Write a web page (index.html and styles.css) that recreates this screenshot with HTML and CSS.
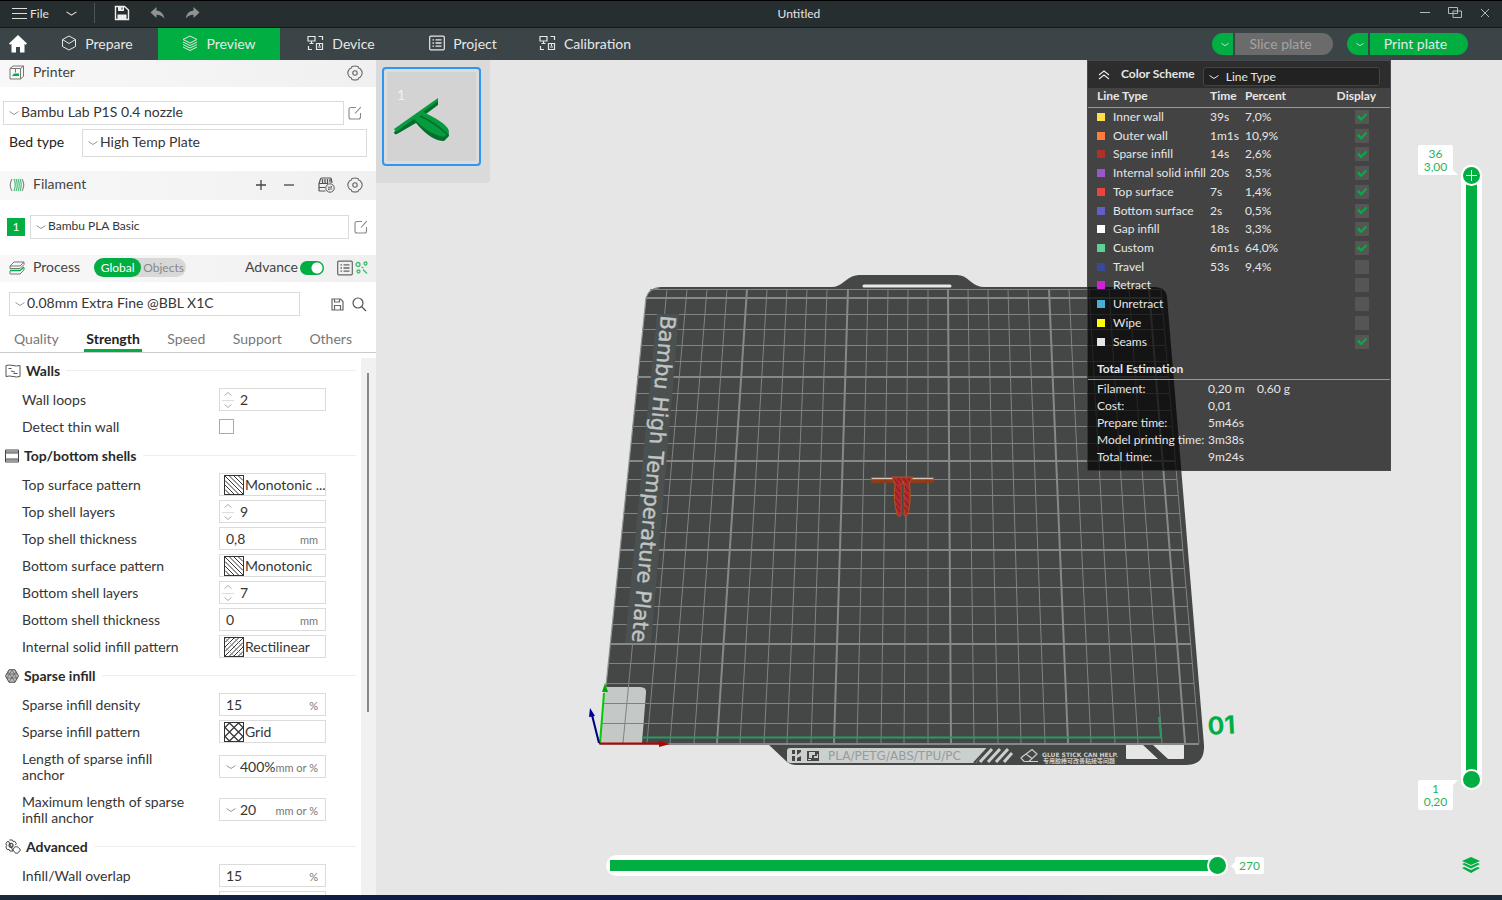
FILE: index.html
```html
<!DOCTYPE html>
<html lang="en">
<head>
    <meta charset="UTF-8">
    <meta name="viewport" content="width=device-width, initial-scale=1.0">
    <title>Untitled</title>
    <link rel="stylesheet" href="styles.css">
</head>
<body>
    <!-- Shared icons -->
    <svg class="sprite" aria-hidden="true">
        <symbol id="chevron" viewBox="0 0 10 6"><path d="M.5 1.500 5 4.500 9.500 1.500" fill="none" stroke="currentColor" stroke-linejoin="round"/></symbol>
        <symbol id="gear" viewBox="0 0 16 16">
            <path d="M5 1.500Q8 .5 11 1.500q.3 2 2.300 2.300Q15 5.500 15.200 8q-.2 2.500-1.900 4.200-2 .3-2.300 2.300-3 1-6 0-.3-2-2.300-2.300Q1 10.500.8 8 1 5.500 2.700 3.800 4.700 3.500 5 1.500z" fill="none" stroke="currentColor" stroke-width="1.100"/>
            <circle cx="8" cy="8" r="2.200" fill="none" stroke="currentColor" stroke-width="1.100"/>
        </symbol>
        <symbol id="edit" viewBox="0 0 14 14"><path d="M8 1.500H3Q1 1.500 1 3.500v7.500q0 2 2 2h7.500q2 0 2-2V7M7 7.500 12.800 1.200" fill="none" stroke="currentColor" stroke-width="1.100"/></symbol>
        <symbol id="device" viewBox="0 0 17 16">
            <path d="M1 1.500h7v4.500H1zM4.500 6v2.500M2.500 8.500h4M11.500 1.500H15.500V5M1.500 11v3.500H5M9.500 8.500h6v6h-6zM12.500 8.500v2.500M11 12h3" fill="none" stroke="currentColor" stroke-width="1.200"/>
        </symbol>
        <symbol id="list" viewBox="0 0 16 16">
            <rect x=".7" y="1.200" width="14.600" height="13.600" rx="1" fill="none" stroke="currentColor" stroke-width="1.200"/>
            <path d="M3.500 4.800h1.500M6.500 4.800h6M3.500 8h1.500M6.500 8h6M3.500 11.200h1.500M6.500 11.200h6" stroke="currentColor" stroke-width="1.300"/>
        </symbol>
        <symbol id="spin" viewBox="0 0 12 20"><path d="M2.500 5.500 6 2.500l3.500 3M2.500 14.500 6 17.500l3.500-3" fill="none" stroke="#b0b0b0"/><path d="M0 10.500h12" stroke="#ddd"/></symbol>
        <symbol id="monotonic" viewBox="0 0 20 20">
            <path d="M1 14.500 5.500 19M1 10l9 9M1 5.500 14.500 19M1 1l18 18M5.500 1 19 14.500M10 1l9 9M14.500 1 19 5.500" stroke="#333"/>
            <rect x=".5" y=".5" width="19" height="19" fill="none" stroke="#333"/>
        </symbol>
        <symbol id="rectilinear" viewBox="0 0 20 20">
            <path d="M1 5.500 5.500 1M1 10l9-9M1 14.500 14.500 1M1 19 19 1M5.500 19 19 5.500M10 19l9-9M14.500 19 19 14.500" stroke="#333"/>
            <path d="M1 10 10 19M1 1l18 18M10 1l9 9" stroke="#888" stroke-width=".6"/>
            <rect x=".5" y=".5" width="19" height="19" fill="none" stroke="#333"/>
        </symbol>
        <symbol id="grid" viewBox="0 0 20 20">
            <path d="M1 5.500 5.500 1M1 14.500 14.500 1M5.500 19 19 5.500M14.500 19 19 14.500M1 14.500 5.500 19M1 5.500 14.500 19M5.500 1 19 14.500M14.500 1 19 5.500" stroke="#333" stroke-width="1.200"/>
            <rect x=".5" y=".5" width="19" height="19" fill="none" stroke="#333"/>
        </symbol>
    </svg>

    <header class="titlebar">
        <button class="file-btn"><svg width="15" height="13" viewBox="0 0 15 13"><path d="M0 1.500h15M0 6.500h15M0 11.500h15" stroke="#ddd" stroke-width="1.200"/></svg>File</button>
        <button class="icon-btn" aria-label="File menu"><svg width="11" height="7"><use href="#chevron"/></svg></button>
        <span class="divider"></span>
        <button class="icon-btn" aria-label="Save"><svg width="16" height="16" viewBox="0 0 16 16"><path d="M1.500 1.500h9l4 3.500v9.500h-13z" fill="none" stroke="#eee" stroke-width="1.400"/><path d="M4 1.500h6V6H4zM3.500 9.500h9v5h-9z" fill="#eee"/><path d="M8 2.500v2" stroke="#262e30"/></svg></button>
        <button class="icon-btn" aria-label="Undo"><svg width="15" height="12" viewBox="0 0 15 12"><path d="M6.500 0v3.500Q13 4 14.500 11.500 11 7.500 6.500 7.700V11L.5 5.500z" fill="#8f9394"/></svg></button>
        <button class="icon-btn" aria-label="Redo"><svg width="15" height="12" viewBox="0 0 15 12"><path d="M8.500 0v3.500Q2 4 .5 11.500 4 7.500 8.500 7.700V11l6-5.500z" fill="#8f9394"/></svg></button>
        <span class="doc-title">Untitled</span>
        <div class="window-controls">
            <button aria-label="Minimize"><svg width="14" height="14" viewBox="0 0 14 14"><path d="M2 6.500h10" stroke="currentColor"/></svg></button>
            <button aria-label="Restore"><svg width="14" height="14" viewBox="0 0 14 14"><path d="M.5 1.500h9v6h-9zM5 5h8.500v6.500H5z" fill="none" stroke="currentColor"/></svg></button>
            <button aria-label="Close"><svg width="14" height="14" viewBox="0 0 14 14"><path d="M3 3l8 8M11 3l-8 8" stroke="currentColor"/></svg></button>
        </div>
    </header>

    <nav class="navbar">
        <button class="home" aria-label="Home"><svg width="18" height="18" viewBox="0 0 18 18"><path d="M9 0 0 8.500l1.200 1.200L2.500 9v8.500H7V12h4v5.500h4.500V9l1.300.7L18 8.500z" fill="#fff"/></svg></button>
        <button class="tab"><svg width="16" height="16" viewBox="0 0 16 16"><path d="M8 1l6.500 3.500v7L8 15l-6.500-3.500v-7zM1.500 4.500 8 8.500l6.500-4" fill="none" stroke="currentColor" stroke-linejoin="round"/></svg>Prepare</button>
        <button class="tab active"><svg width="16" height="16" viewBox="0 0 16 16"><path d="M8 1l7 3.500L8 8 1 4.500zM1 7l7 3.500L15 7M1 9.500 8 13l7-3.500M1 12l7 3.500 7-3.500" fill="none" stroke="currentColor"/></svg>Preview</button>
        <button class="tab"><svg width="17" height="16"><use href="#device"/></svg>Device</button>
        <button class="tab"><svg width="16" height="16"><use href="#list"/></svg>Project</button>
        <button class="tab"><svg width="17" height="16"><use href="#device"/></svg>Calibration</button>
        <div class="actions">
            <div class="split">
                <button class="split-arrow" aria-label="Slice options"><svg width="8" height="5"><use href="#chevron"/></svg></button>
                <button class="split-main" disabled>Slice plate</button>
            </div>
            <div class="split">
                <button class="split-arrow" aria-label="Print options"><svg width="8" height="5"><use href="#chevron"/></svg></button>
                <button class="split-main">Print plate</button>
            </div>
        </div>
    </nav>

    <main class="workspace">
        <aside class="sidebar">
            <div class="panel-head printer-head">
                <svg width="16" height="15" viewBox="0 0 16 15"><path d="M1 3.500 4 1h10.500v10.500l-3 2.500H1zM1 3.500h10.500V14M11.500 3.500l3-2.500" fill="none" stroke="#777"/><path d="M3 11 5 8.500h5V11z" fill="#00ae42"/><path d="M6.500 4v3.500" stroke="#777"/></svg>
                <h2>Printer</h2>
                <button aria-label="Printer settings"><svg width="16" height="16"><use href="#gear"/></svg></button>
            </div>
            <div class="printer-row">
                <div class="combo">
                    <svg width="10" height="6"><use href="#chevron"/></svg>
                    <select aria-label="Printer"><option>Bambu Lab P1S 0.4 nozzle</option></select>
                </div>
                <button aria-label="Edit printer"><svg width="14" height="14"><use href="#edit"/></svg></button>
            </div>
            <div class="bed-row">
                <label for="bed">Bed type</label>
                <div class="combo">
                    <svg width="10" height="6"><use href="#chevron"/></svg>
                    <select id="bed"><option>High Temp Plate</option></select>
                </div>
            </div>

            <div class="panel-head filament-head">
                <svg width="16" height="14" viewBox="0 0 16 14"><path d="M3 1Q-.5 7 3 13M13 1q3.500 6 0 12" fill="none" stroke="#888" stroke-width="1.200"/><path d="M5 1q2.500 6 0 12M7 1q2.500 6 0 12M9 1q2.500 6 0 12M11 1q2.500 6 0 12" fill="none" stroke="#3dbb6c" stroke-width="1.100"/></svg>
                <h2>Filament</h2>
                <div class="filament-tools">
                    <button aria-label="Add filament"><svg width="12" height="12" viewBox="0 0 12 12"><path d="M6 1v10M1 6h10" stroke="#444" stroke-width="1.300"/></svg></button>
                    <button aria-label="Remove filament"><svg width="12" height="12" viewBox="0 0 12 12"><path d="M1 6h10" stroke="#444" stroke-width="1.300"/></svg></button>
                </div>
                <button aria-label="Sync AMS"><svg width="17" height="16" viewBox="0 0 17 16"><path d="M1 14V6.500L2.500 2Q3 1 4 1h8q1 0 1.300 1L14 6M1 6.500h9M1 14h6.500M1 10.500h6" fill="none" stroke="#555" stroke-width="1.200"/><path d="M4.500 2v4M7 2v4M9.500 2v4M12 2v3.500" stroke="#555" stroke-width="1.300"/><circle cx="12" cy="11" r="4.200" fill="#f4f4f4" stroke="#555"/><path d="M9.800 10.200h4.200l-1.300-1.300M14.200 12H10l1.300 1.300" fill="none" stroke="#555" stroke-width=".9"/></svg></button>
                <button aria-label="Filament settings"><svg width="16" height="16"><use href="#gear"/></svg></button>
            </div>
            <div class="filament-row">
                <span class="slot">1</span>
                <div class="combo">
                    <svg width="10" height="6"><use href="#chevron"/></svg>
                    <select aria-label="Filament"><option>Bambu PLA Basic</option></select>
                </div>
                <button aria-label="Edit filament"><svg width="14" height="14"><use href="#edit"/></svg></button>
            </div>

            <div class="panel-head process-head">
                <svg width="16" height="14" viewBox="0 0 16 14"><path d="M5 1h10l-4 4H1zM1 5v2.500h10l4-4V1M1 10v3h10l4-4V6.500" fill="none" stroke="#777"/><path d="M1 9.500h10l4-3.500" fill="none" stroke="#00ae42" stroke-width="1.300"/></svg>
                <h2>Process</h2>
                <div class="scope"><button class="on">Global</button><button>Objects</button></div>
                <label class="advance" for="advance">Advance</label>
                <input class="switch" type="checkbox" id="advance" checked>
                <button class="compare" aria-label="Compare presets"><svg width="16" height="16"><use href="#list"/></svg></button>
                <button aria-label="Process options"><svg width="13" height="13" viewBox="0 0 13 13"><g fill="none" stroke="#3dbb6c" stroke-width="1.300"><circle cx="3" cy="3.500" r="2"/><circle cx="10.500" cy="2.500" r="1.500"/><circle cx="3.500" cy="10.500" r="1.500"/><path d="M6.500 6l2 1M8 8.500l4 4"/></g></svg></button>
            </div>
            <div class="preset-row">
                <div class="combo">
                    <svg width="10" height="6"><use href="#chevron"/></svg>
                    <select aria-label="Process preset"><option>0.08mm Extra Fine @BBL X1C</option></select>
                </div>
                <button aria-label="Save preset"><svg width="13" height="13" viewBox="0 0 13 13"><path d="M1 1h8.500L12 3.500V12H1zM3.500 1v3h5V1M3.500 12V7.500h6V12" fill="none" stroke="#666" stroke-width="1.200"/></svg></button>
                <button aria-label="Search settings"><svg width="15" height="15" viewBox="0 0 15 15"><circle cx="6" cy="6" r="5" fill="none" stroke="#555" stroke-width="1.200"/><path d="M9.500 9.500 14 14" stroke="#555" stroke-width="1.300"/></svg></button>
            </div>

            <div class="subtabs">
                <button>Quality</button>
                <button class="on">Strength</button>
                <button>Speed</button>
                <button>Support</button>
                <button>Others</button>
            </div>

            <div class="settings">
                <div class="settings-list">
                    <h3><svg width="16" height="14" viewBox="0 0 16 14"><path d="M1 1.500q3.500-1 7 0t7 0v11q-3.500 1-7 0t-7 0z" fill="none" stroke="#555"/><path d="M3.500 4.500h3M6 7l4 1M8.500 9.500h4" stroke="#555"/></svg>Walls</h3>
                    <div class="row">
                        <label for="loops">Wall loops</label>
                        <div class="field"><svg class="spin" width="12" height="20"><use href="#spin"/></svg><input id="loops" value="2"></div>
                    </div>
                    <div class="row">
                        <label for="thin">Detect thin wall</label>
                        <input class="tick" type="checkbox" id="thin">
                    </div>

                    <h3><svg width="14" height="14" viewBox="0 0 14 14"><path d="M.5 1h13v12H.5z" fill="none" stroke="#444"/><path d="M1 2.500h12M1 11.500h12" stroke="#999" stroke-width="2"/><path d="M1 4h12M1 10h12" stroke="#444"/></svg>Top/bottom shells</h3>
                    <div class="row">
                        <label for="tsp">Top surface pattern</label>
                        <div class="field pattern"><svg width="20" height="20"><use href="#monotonic"/></svg><select id="tsp"><option>Monotonic ...</option></select></div>
                    </div>
                    <div class="row">
                        <label for="tsl">Top shell layers</label>
                        <div class="field"><svg class="spin" width="12" height="20"><use href="#spin"/></svg><input id="tsl" value="9"></div>
                    </div>
                    <div class="row">
                        <label for="tst">Top shell thickness</label>
                        <div class="field"><input id="tst" value="0,8"><span class="unit">mm</span></div>
                    </div>
                    <div class="row">
                        <label for="bsp">Bottom surface pattern</label>
                        <div class="field pattern"><svg width="20" height="20"><use href="#monotonic"/></svg><select id="bsp"><option>Monotonic</option></select></div>
                    </div>
                    <div class="row">
                        <label for="bsl">Bottom shell layers</label>
                        <div class="field"><svg class="spin" width="12" height="20"><use href="#spin"/></svg><input id="bsl" value="7"></div>
                    </div>
                    <div class="row">
                        <label for="bst">Bottom shell thickness</label>
                        <div class="field"><input id="bst" value="0"><span class="unit">mm</span></div>
                    </div>
                    <div class="row">
                        <label for="isp">Internal solid infill pattern</label>
                        <div class="field pattern"><svg width="20" height="20"><use href="#rectilinear"/></svg><select id="isp"><option>Rectilinear</option></select></div>
                    </div>

                    <h3><svg width="14" height="14" viewBox="0 0 14 14"><path d="M4 .7h6L13.500 7 10 13.300H4L.5 7z" fill="#bbb" stroke="#555"/><path d="M1 5h12M1 9h12M3 2.500 10 13M7 1l5 9M11 2.500 4 13M7 1 2 9" stroke="#666" stroke-width=".8"/></svg>Sparse infill</h3>
                    <div class="row">
                        <label for="sid">Sparse infill density</label>
                        <div class="field"><input id="sid" value="15"><span class="unit">%</span></div>
                    </div>
                    <div class="row">
                        <label for="sip">Sparse infill pattern</label>
                        <div class="field pattern"><svg width="20" height="20"><use href="#grid"/></svg><select id="sip"><option>Grid</option></select></div>
                    </div>
                    <div class="row tall">
                        <label for="lsa">Length of sparse infill anchor</label>
                        <div class="field anchor"><svg width="10" height="6"><use href="#chevron"/></svg><select id="lsa"><option>400%</option></select><span class="unit">mm or %</span></div>
                    </div>
                    <div class="row tall">
                        <label for="msa">Maximum length of sparse infill anchor</label>
                        <div class="field anchor"><svg width="10" height="6"><use href="#chevron"/></svg><select id="msa"><option>20</option></select><span class="unit">mm or %</span></div>
                    </div>

                    <h3><svg width="16" height="15" viewBox="0 0 16 15"><path d="M4.300 1h3.200l.6 1.600 1.700-.3 1.500 2.400-.9 1.500M8 12H4.800l-.7-1.600-1.800.2L.8 8l1-1.500-1-1.600 1.500-2.400 1.600.2z" fill="none" stroke="#444" stroke-linejoin="round"/><circle cx="6" cy="6.300" r="2" fill="none" stroke="#444" stroke-width="1.200"/><path d="M9.800 7.800h3l.6 1 1.700 1.200v2l-1.500.7-.7 1.500h-2.600l-.7-1.500L8.300 12v-2z" fill="none" stroke="#555" stroke-linejoin="round"/></svg>Advanced</h3>
                    <div class="row">
                        <label for="iwo">Infill/Wall overlap</label>
                        <div class="field"><input id="iwo" value="15"><span class="unit">%</span></div>
                    </div>
                    <div class="row">
                        <div class="field"><input aria-label="Advanced value"></div>
                    </div>
                </div>
                <div class="scrollbar"><div class="thumb"></div></div>
            </div>
        </aside>

        <section class="viewport">
            <svg class="scene" viewBox="376 60 1126 835">
                <!-- Build plate -->
                <path d="M600 744 646 298Q649 287 661 287H832Q838 287 845 281 852 275 859 275H957Q964 275 970 281 977 287 984 287H1154Q1166 287 1167 297L1204 745Q1205 765 1186 765H796Q790 765 786 761L768 744z" fill="#454746"/>
                <path d="M600 744 646 298Q649 288 659 288" fill="none" stroke="#8f9694" stroke-width="1.200"/>
                <path d="M864 286h86" stroke="#e8e8e8" stroke-width="3" stroke-linecap="round"/>
                <path d="M605 687h35q7 0 6 6l-4 50h-42z" fill="#c4c8c7"/>
                <path class="grid-line" d="M667 289 623 743M687 289 647 743M707 289 670 743M727 289 694 743M767 289 740 743M787 289 764 743M807 289 787 743M827 289 811 743M868 289 857 743M888 289 881 743M908 289 904 743M928 289V743M968 289 974 743M988 289 998 743M1008 289 1021 743M1028 289 1045 743M1069 289 1091 743M1089 289 1115 743M1109 289 1138 743M1129 289 1162 743M1161 289 1199 743"/>
                <path class="grid-line" d="M602 723.500H1197M604 703.500H1196M606 683.500H1194M608 663.500H1192M612 624.500H1189M614 606.500H1187M616 587.500H1186M618 568.500H1184M622 532.500H1181M624 513.500H1180M625 495.500H1178M627 479.500H1177M631 443.500H1174M632 426.500H1172M634 410.500H1171M636 393.500H1170M639 361.500H1167M641 345.500H1166M642 329.500H1164M644 314.500H1163M650 289.500H1161"/>
                <path class="grid-line bold" d="M747 289 717 743M848 289 834 743M948 289 951 743M1049 289 1068 743M1149 289 1185 743M610 644H1191M620 550H1183M629 461H1175M637 377H1168M646 298H1162M600 744H1199"/>
                <!-- Plate name strip -->
                <path d="M657 314h22l-28 329h-26z" fill="#4b5150"/>
                <text class="plate-name" transform="translate(661 315) rotate(95.100)">Bambu High Temperature Plate</text>
                <path d="M642 737.500H1161L1159 717" fill="none" stroke="#2b9a62" stroke-width="2"/>
                <!-- Front lip -->
                <path d="M790 748H988L976 763H790q-3 0-3-3v-9q0-3 3-3z" fill="#cbcfce"/>
                <path d="M792 750h3v4h-3zM797 750h4v2l-4 3zM792 756h3v5h-3zM797 758l4-2v5h-4z" fill="#454746"/>
                <path d="M807 751h12v10h-12z" fill="#454746"/><path d="M809 752h6v3h-3v3h-3zM817 754h1v4h-4v-2h3zM808 759h3v1h-3z" fill="#cbcfce"/>
                <text class="lip-text" x="828" y="760">PLA/PETG/ABS/TPU/PC</text>
                <path d="M974 763 988 748M982 763l14-15M990 763l14-15M998 763l14-15" stroke="#454746" stroke-width="2"/>
                <path d="M980 762l12-13M988 762l12-13M996 762l12-13M1004 762l8-9" stroke="#cbcfce" stroke-width="3"/>
                <path d="M1022 757 1032 749.500 1037 754 1029 761.500h-5L1021 758zM1026 754l6 4.500M1029 761.500h9" fill="none" stroke="#cbcfce" stroke-width="1.200"/>
                <text class="lip-note" x="1042" y="757">GLUE STICK CAN HELP.</text>
                <text class="lip-note" x="1043" y="763">专用胶棒可改善粘接等问题</text>
                <path d="M1126 745h17l15 14h-31q-1 0-1-1zM1153 745h31v13q0 1-1 1h-15z" fill="#e6e6e6"/>
                <!-- Axes -->
                <g stroke-width="2">
                    <path d="M600 743l4-50" stroke="#0c0"/><path d="M605 683l3 9h-6z" fill="#0a0"/>
                    <path d="M599 743.500h62" stroke="#c00000"/><path d="M670 744l-11-3v6z" fill="#b80000"/>
                    <path d="M599 743l-7-28" stroke="#000080"/><path d="M590 708l5 8-6 1z" fill="#0000a0"/>
                </g>
                <text class="plate-no" transform="translate(1208 735) rotate(-3)">01</text>
                <!-- Sliced model -->
                <path d="M871 477h63v6h-63z" fill="#8c3c17"/>
                <path d="M871.500 477.500h62v2h-62z" fill="#d8c3b4" stroke="#b5521f"/>
                <path d="M892 477h21l-3.500 6q2 18-1.500 31-2 4-4 1V484l-1-3-1 3-.5 31q-3 3-4.500-1-4-13-2-30z" fill="#b22c2c" stroke="#b5521f"/>
                <path d="M902.500 485v32" stroke="#454746" stroke-width="1.500"/>
                <path d="M894 479l4 5M898 478l4 5M903 478l4 5M908 478l2 3M896 486l4 6M895 492l5 7M895 499l5 7M896 506l4 6M905 486l4 6M904 493l5 6M904 500l5 6M904 507l4 5" stroke="#7c1a20"/>
            </svg>

            <div class="plates">
                <button class="plate-card" aria-label="Plate 1">
                    <span>1</span>
                    <svg width="56" height="44" viewBox="0 0 56 44"><path d="M0 34 44 2v5L32 16q24 12 23 22l-5 5q-13 0-28-18L3 36q-3 1-3-2z" fill="#02702d"/><path d="M0 31 44 0v3L29 14q26 12 26 20l-5 5Q34 36 20 21L2 34z" fill="#079b3f"/><path d="M26 18q14 6 27 18" stroke="#02702d" stroke-width="1.500" fill="none"/></svg>
                </button>
            </div>

            <div class="legend">
                <div class="legend-head">
                    <svg width="12" height="10" viewBox="0 0 12 10"><path d="M1 5l5-4 5 4M1 9l5-4 5 4" fill="none" stroke="#eee" stroke-width="1.100"/></svg>
                    <label for="scheme">Color Scheme</label>
                    <div class="scheme"><svg width="10" height="6"><use href="#chevron"/></svg><select id="scheme"><option>Line Type</option></select></div>
                </div>
                <table class="types">
                    <thead><tr><th>Line Type</th><th>Time</th><th>Percent</th><th>Display</th></tr></thead>
                    <tbody>
                        <tr><td><i class="inner"></i>Inner wall</td><td>39s</td><td>7,0%</td><td><input type="checkbox" aria-label="Inner wall" checked></td></tr>
                        <tr><td><i class="outer"></i>Outer wall</td><td>1m1s</td><td>10,9%</td><td><input type="checkbox" aria-label="Outer wall" checked></td></tr>
                        <tr><td><i class="sparse"></i>Sparse infill</td><td>14s</td><td>2,6%</td><td><input type="checkbox" aria-label="Sparse infill" checked></td></tr>
                        <tr><td><i class="solid"></i>Internal solid infill</td><td>20s</td><td>3,5%</td><td><input type="checkbox" aria-label="Internal solid infill" checked></td></tr>
                        <tr><td><i class="top"></i>Top surface</td><td>7s</td><td>1,4%</td><td><input type="checkbox" aria-label="Top surface" checked></td></tr>
                        <tr><td><i class="bottom"></i>Bottom surface</td><td>2s</td><td>0,5%</td><td><input type="checkbox" aria-label="Bottom surface" checked></td></tr>
                        <tr><td><i class="gap"></i>Gap infill</td><td>18s</td><td>3,3%</td><td><input type="checkbox" aria-label="Gap infill" checked></td></tr>
                        <tr><td><i class="custom"></i>Custom</td><td>6m1s</td><td>64,0%</td><td><input type="checkbox" aria-label="Custom" checked></td></tr>
                        <tr><td><i class="travel"></i>Travel</td><td>53s</td><td>9,4%</td><td><input type="checkbox" aria-label="Travel"></td></tr>
                        <tr><td><i class="retract"></i>Retract</td><td></td><td></td><td><input type="checkbox" aria-label="Retract"></td></tr>
                        <tr><td><i class="unretract"></i>Unretract</td><td></td><td></td><td><input type="checkbox" aria-label="Unretract"></td></tr>
                        <tr><td><i class="wipe"></i>Wipe</td><td></td><td></td><td><input type="checkbox" aria-label="Wipe"></td></tr>
                        <tr><td><i class="seams"></i>Seams</td><td></td><td></td><td><input type="checkbox" aria-label="Seams" checked></td></tr>
                    </tbody>
                </table>
                <h4>Total Estimation</h4>
                <table class="totals">
                    <tr><td>Filament:</td><td>0,20 m</td><td>0,60 g</td></tr>
                    <tr><td>Cost:</td><td>0,01</td><td></td></tr>
                    <tr><td>Prepare time:</td><td>5m46s</td><td></td></tr>
                    <tr><td>Model printing time:</td><td>3m38s</td><td></td></tr>
                    <tr><td>Total time:</td><td>9m24s</td><td></td></tr>
                </table>
            </div>

            <div class="layer-slider">
                <input class="upper" type="range" min="1" max="36" value="36" aria-label="Top layer">
                <input class="lower" type="range" min="1" max="36" value="1" aria-label="Bottom layer">
                <output class="tip tip-top">36<br>3,00</output>
                <output class="tip tip-bottom">1<br>0,20</output>
            </div>

            <div class="move-slider">
                <input type="range" min="0" max="270" value="270" aria-label="Move">
                <output class="tip">270</output>
            </div>
            <button class="layers-btn" aria-label="Layers"><svg width="18" height="16" viewBox="0 0 18 16"><path d="M9 0l9 4-9 4-9-4zM0 7l2.500-1L9 9l6.500-3L18 7l-9 4.500zM0 11l2.500-1L9 13l6.500-3 2.500 1-9 5z" fill="#00ae42"/></svg></button>
        </section>
    </main>
    <footer class="desktop-edge"></footer>
</body>
</html>
```
FILE: styles.css
```css
* {
    box-sizing: border-box;
}
body {
    margin: 0;
    height: 100vh;
    display: flex;
    flex-direction: column;
    overflow: hidden;
    font-family: Lato, "Noto Sans CJK SC", sans-serif;
    font-size: 14px;
    color: #363636;
    background: #fff;
}
button, input, select {
    font: inherit;
    color: inherit;
    margin: 0;
    padding: 0;
    border: 0;
    background: none;
}
button {
    display: flex;
    align-items: center;
    justify-content: center;
}
select {
    appearance: none;
    min-width: 0;
    flex: 1;
}
svg {
    flex: none;
    display: block;
}
.sprite {
    position: absolute;
    width: 0;
    height: 0;
}

/* Title bar */
.titlebar {
    display: flex;
    align-items: center;
    flex: none;
    height: 28px;
    padding: 0 10px 2px 12px;
    background: #262e30;
    border-top: 1px solid #000;
    border-bottom: 1px solid #12181a;
    color: #e4e4e4;
    font-size: 12px;
}
.file-btn {
    gap: 3px;
    margin-right: 17px;
}
.divider {
    width: 1px;
    height: 20px;
    margin: 0 19px 0 17px;
    background: #4d5456;
}
.titlebar .icon-btn + .icon-btn {
    margin-left: 20px;
}
.doc-title {
    flex: 1;
    text-align: center;
}
.window-controls {
    display: flex;
    gap: 16px;
    padding-left: 20px;
    color: #b4b8b9;
}

/* Tabs */
.navbar {
    display: flex;
    flex: none;
    height: 32px;
    padding-right: 34px;
    background: #3b4446;
    color: #e8e8e8;
}
.home {
    width: 36px;
}
.tab {
    width: 122px;
    gap: 8px;
    padding-bottom: 2px;
}
.tab.active {
    background: #00ae42;
}
.actions {
    display: flex;
    gap: 14px;
    align-items: center;
    margin-left: auto;
}
.split {
    display: flex;
    gap: 2px;
    height: 22px;
}
.split-arrow {
    width: 21px;
    padding-left: 4px;
    background: #00ae42;
    border-radius: 11px 0 0 11px;
}
.split-main {
    width: 98px;
    padding: 0 7px 2px 0;
    background: #00ae42;
    border-radius: 0 11px 11px 0;
}
.split-main:disabled {
    background: #6b6b6b;
    color: #a3a3a3;
}

.workspace {
    display: flex;
    flex: 1;
    min-height: 0;
}

/* Sidebar */
.sidebar {
    display: flex;
    flex-direction: column;
    flex: none;
    width: 376px;
    background: #fff;
}
.panel-head {
    display: flex;
    align-items: center;
    flex: none;
    padding: 0 13px 2px 9px;
    background: linear-gradient(90deg, #f8f8f8, #f0f0f0);
    color: #666;
}
.panel-head h2 {
    margin: 0 auto 0 8px;
    padding-bottom: 2px;
    font-size: 14px;
    font-weight: 400;
    color: #444;
}
.printer-head {
    height: 27px;
}
.filament-head {
    height: 29px;
    margin-top: 14px;
    gap: 12px;
}
.filament-head h2 {
    margin-left: -4px;
}
.filament-tools {
    display: flex;
    gap: 16px;
    margin-right: 11px;
}
.process-head {
    height: 27px;
    margin-top: 15px;
    padding-right: 8px;
}
.process-head h2 {
    margin-right: 14px;
}
.combo {
    display: flex;
    align-items: center;
    flex: 1;
    gap: 2px;
    height: 24px;
    padding-left: 5px;
    border: 1px solid #dbdbdb;
    color: #999;
}
.combo select {
    padding-bottom: 3px;
    color: #363636;
}
.printer-row {
    display: flex;
    gap: 4px;
    margin: 14px 14px 0 3px;
    color: #888;
}
.bed-row {
    display: flex;
    align-items: center;
    margin: 4px 9px 0;
    color: #222;
}
.bed-row label {
    width: 73px;
    padding-bottom: 4px;
}
.bed-row .combo {
    height: 28px;
}
.filament-row {
    display: flex;
    align-items: center;
    margin: 15px 8px 1px 7px;
    gap: 5px;
    color: #888;
    font-size: 12px;
}
.slot {
    width: 18px;
    height: 18px;
    line-height: 18px;
    text-align: center;
    background: #00ae42;
    color: #fff;
}
.scope {
    display: flex;
    height: 19px;
    margin-right: auto;
    border-radius: 10px;
    background: #d8d8d8;
    font-size: 12px;
    color: #888;
}
.scope button {
    width: 45px;
}
.scope .on {
    width: 47px;
    border-radius: 10px;
    background: #00ae42;
    color: #fff;
}
.advance {
    padding-bottom: 2px;
    color: #444;
    margin-right: 2px;
}
.switch {
    appearance: none;
    width: 24px;
    height: 14px;
    border-radius: 7px;
    background: radial-gradient(circle at 17px 7px, #fff 5px, transparent 6px) #00ae42;
}
.compare {
    margin: 0 2px 0 13px;
}
.preset-row {
    display: flex;
    align-items: center;
    margin: 10px 9px 0;
    color: #666;
}
.preset-row .combo {
    margin-right: 31px;
}
.preset-row button + button {
    margin-left: 8px;
}

.subtabs {
    display: flex;
    justify-content: space-between;
    flex: none;
    height: 37px;
    padding: 8px 22px 0 12px;
    border-bottom: 1px solid #ccc;
    color: #777;
}
.subtabs button {
    padding: 4px 2px 0;
    border-bottom: 3px solid transparent;
}
.subtabs .on {
    font-weight: 700;
    color: #222;
    border-bottom-color: #00ae42;
}

.settings {
    display: flex;
    flex: 1;
    min-height: 0;
    padding-left: 5px;
}
.settings-list {
    flex: 1;
    padding: 2px 5px 0 0;
    overflow: hidden;
}
.settings-list h3 {
    display: flex;
    align-items: center;
    gap: 5px;
    height: 31px;
    margin: 0;
    font-size: 14px;
    font-weight: 700;
    color: #2a2a2a;
}
.settings-list h3::after {
    content: "";
    flex: 1;
    height: 1px;
    margin-left: 1px;
    background: #eee;
}
.row {
    display: flex;
    align-items: center;
    height: 27px;
    padding: 0 30px 0 17px;
}
.row.tall {
    height: 43px;
}
.row label {
    flex: none;
    width: 197px;
    padding-right: 30px;
    line-height: 16px;
}
.field {
    display: flex;
    align-items: center;
    width: 107px;
    height: 23px;
    margin-left: auto;
    padding: 0 7px 0 6px;
    border: 1px solid #dbdbdb;
}
.field input, .field select {
    padding-bottom: 1px;
}
.field input {
    flex: 1;
    width: 0;
}
.spin {
    margin: 0 6px 0 -4px;
}
.field.pattern {
    padding: 0 0 0 4px;
}
.field.pattern select {
    margin-left: 1px;
}
.field.anchor {
    color: #999;
}
.anchor select {
    margin-left: 4px;
    color: #363636;
}
.unit {
    font-size: 11px;
    color: #777;
    padding-top: 2px;
}
.tick {
    appearance: none;
    width: 15px;
    height: 15px;
    border: 1px solid #aaa;
}
.scrollbar {
    width: 15px;
    margin-top: 5px;
    padding: 15px 7px 0 6px;
    background: #f1f1f1;
}
.thumb {
    height: 65%;
    background: #888;
}

/* 3D view */
.viewport {
    position: relative;
    flex: 1;
    min-width: 0;
    background: #e6e6e6;
}
.scene {
    width: 100%;
    height: 100%;
}
.grid-line {
    fill: none;
    stroke: #7f8382;
    stroke-width: 1;
}
.grid-line.bold {
    stroke: #858988;
    stroke-width: 2;
}
.plate-name {
    font: 21px "DejaVu Sans", sans-serif;
    fill: #c0c5c4;
    stroke: #c0c5c4;
    stroke-width: 0.4;
}
.lip-text {
    font: 12px "DejaVu Sans", sans-serif;
    fill: #979c9b;
}
.lip-note {
    font: 700 6px "DejaVu Sans", "Noto Sans CJK SC", sans-serif;
    fill: #cbcfce;
}
.plate-no {
    font: 700 25px Inter, sans-serif;
    fill: #00ae42;
}

.plates {
    position: absolute;
    top: 0;
    left: 0;
    padding: 7px 9px 17px 6px;
    border-radius: 0 0 4px 0;
    background: #dadada;
}
.plate-card {
    display: block;
    width: 99px;
    height: 99px;
    padding: 11px 10px;
    border: 2px solid #2f97f0;
    border-radius: 4px;
    background: #d3d3d3;
    box-shadow: inset 0 0 0 3px #dcdcdc;
    text-align: left;
    color: #f2f2f2;
}
.plate-card span {
    display: block;
    height: 7px;
    padding-left: 3px;
    line-height: 8px;
}

/* Legend */
.legend {
    position: absolute;
    top: 0;
    right: 111px;
    width: 304px;
    height: 411px;
    background: rgba(0, 0, 0, 0.71);
    border: 1px solid rgba(80, 80, 90, 0.5);
    color: #e6e6e6;
    font-size: 12px;
}
.legend-head {
    display: flex;
    align-items: center;
    height: 27px;
    padding: 0 10px;
    background: rgba(0, 0, 0, 0.32);
    font-weight: 700;
}
.legend-head label {
    margin: 0 8px 0 11px;
    padding-bottom: 2px;
}
.scheme {
    display: flex;
    align-items: center;
    flex: 1;
    gap: 7px;
    height: 19px;
    margin-top: 4px;
    padding-left: 5px;
    border: 1px solid #444;
    border-radius: 3px;
    background: #222;
    font-weight: 400;
}
.legend table {
    width: 100%;
    border-collapse: collapse;
    table-layout: fixed;
}
.legend td, .legend th {
    padding: 0;
    text-align: left;
    line-height: 14px;
    white-space: nowrap;
}
.legend td:first-child, .legend th:first-child {
    padding-left: 9px;
}
.legend .types th {
    padding-bottom: 2px;
}
.types {
    height: 263px;
}
.types thead tr {
    height: 19px;
    border-bottom: 1px solid #999;
}
.types th:nth-child(1) {
    width: 122px;
}
.types th:nth-child(2) {
    width: 35px;
}
.types th:nth-child(4), .types td:nth-child(4) {
    padding-right: 14px;
    text-align: right;
}
.types td:nth-child(4) {
    padding-right: 21px;
}
.types i {
    display: inline-block;
    width: 8px;
    height: 8px;
    margin-right: 8px;
}
.types input {
    appearance: none;
    display: block;
    width: 14px;
    height: 14px;
    margin-left: auto;
    background: #555;
    overflow: hidden;
}
.types input:checked::before {
    content: "";
    display: block;
    width: 14px;
    height: 14px;
    background: #00ae42;
    clip-path: polygon(2px 7px, 4px 5px, 6px 8px, 11px 3px, 12px 5px, 6px 11px);
}
.inner { background: #ffe04a; }
.outer { background: #ff7d38; }
.sparse { background: #b03029; }
.solid { background: #9a54cc; }
.top { background: #f04040; }
.bottom { background: #665cc7; }
.gap { background: #fff; }
.custom { background: #5ed194; }
.travel { background: #38489b; }
.retract { background: #cd22d6; }
.unretract { background: #49add6; }
.wipe { background: #ff0; }
.seams { background: #e6e6e6; }
.legend h4 {
    height: 29px;
    margin: 0;
    padding: 10px 9px 0;
    font-size: 12px;
    line-height: 16px;
    border-bottom: 1px solid #999;
}
.totals tr {
    height: 17px;
}
.totals td:nth-child(1) {
    width: 120px;
}
.totals td:nth-child(2) {
    width: 49px;
}

/* Sliders */
input[type="range"] {
    appearance: none;
    display: block;
    border-radius: 11px;
}
input[type="range"]::-webkit-slider-thumb {
    appearance: none;
    width: 21px;
    height: 21px;
    border: 2px solid #fff;
    border-radius: 50%;
    background: #00ae42;
}
.layer-slider {
    position: absolute;
    top: 105px;
    right: 20px;
    bottom: 105px;
    width: 21px;
}
.layer-slider input {
    position: absolute;
    inset: 0;
    width: 21px;
    height: 100%;
    writing-mode: vertical-lr;
    direction: rtl;
}
.layer-slider .upper {
    background: linear-gradient(#00ae42, #00ae42) center / 11px calc(100% - 20px) no-repeat #fff;
}
.layer-slider .lower {
    pointer-events: none;
}
.layer-slider .lower::-webkit-slider-thumb {
    pointer-events: auto;
}
.layer-slider .upper::-webkit-slider-thumb {
    background: linear-gradient(#fff, #fff) center / 11px 1px no-repeat, linear-gradient(#fff, #fff) center / 1px 11px no-repeat, #00ae42;
}
.tip {
    position: absolute;
    padding: 2px 4px;
    border-radius: 2px;
    background: #fff;
    color: #2bb35c;
    font-size: 12px;
    line-height: 13px;
    text-align: center;
}
.tip::after {
    content: "";
    position: absolute;
    border: 5px solid transparent;
}
.layer-slider .tip {
    right: 29px;
    width: 35px;
}
.tip-top {
    top: -20px;
}
.tip-top::after {
    right: -5px;
    bottom: 0;
    border-bottom-color: #fff;
}
.tip-bottom {
    bottom: -20px;
}
.tip-bottom::after {
    right: -5px;
    top: 0;
    border-top-color: #fff;
}
.move-slider {
    position: absolute;
    left: 230px;
    right: 274px;
    bottom: 19px;
}
.move-slider input {
    width: 100%;
    height: 21px;
    background: linear-gradient(#00ae42, #00ae42) 4px center / calc(100% - 14px) 11px no-repeat #fff;
}
.move-slider .tip {
    top: 2px;
    left: calc(100% + 7px);
}
.move-slider .tip::after {
    left: -9px;
    top: 4px;
    border-right-color: #fff;
}
.layers-btn {
    position: absolute;
    right: 22px;
    bottom: 22px;
}

.desktop-edge {
    flex: none;
    height: 5px;
    background: linear-gradient(90deg, #1c2938, #101c45 25%, #0f1a55 68%, #1c2938 75%, #1a2c3c);
}
```
